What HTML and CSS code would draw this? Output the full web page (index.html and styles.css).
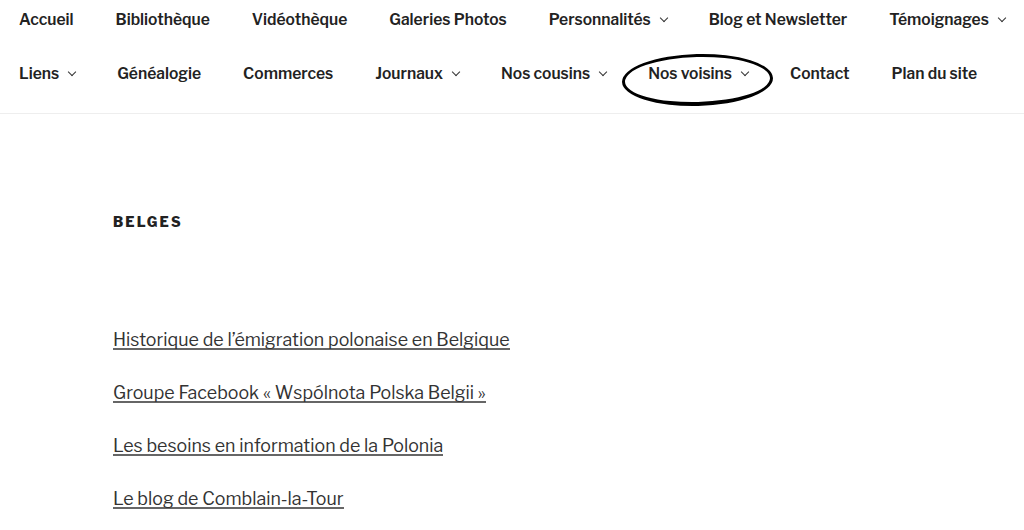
FILE: index.html
```html
<!DOCTYPE html>
<html lang="fr">
<head>
<meta charset="utf-8">
<title>Belges</title>
<link rel="stylesheet" href="styles.css">
</head>
<body>
<header class="site-nav">
  <ul class="menu">
    <li><a href="#">Accueil</a></li>
    <li><a href="#">Bibliothèque</a></li>
    <li><a href="#">Vidéothèque</a></li>
    <li><a href="#">Galeries Photos</a></li>
    <li><a href="#" class="has-sub">Personnalités</a></li>
    <li><a href="#">Blog et Newsletter</a></li>
    <li><a href="#" class="has-sub">Témoignages</a></li>
  </ul>
  <ul class="menu">
    <li><a href="#" class="has-sub">Liens</a></li>
    <li><a href="#">Généalogie</a></li>
    <li><a href="#">Commerces</a></li>
    <li><a href="#" class="has-sub">Journaux</a></li>
    <li><a href="#" class="has-sub">Nos cousins</a></li>
    <li class="circled"><a href="#" class="has-sub">Nos voisins</a><span class="ring"></span></li>
    <li><a href="#">Contact</a></li>
    <li><a href="#">Plan du site</a></li>
  </ul>
</header>
<main class="content">
  <h2 class="page-title">Belges</h2>
  <ul class="links">
    <li><a href="#">Historique de l’émigration polonaise en Belgique</a></li>
    <li><a href="#">Groupe Facebook « Wspólnota Polska Belgii »</a></li>
    <li><a href="#">Les besoins en information de la Polonia</a></li>
    <li><a href="#">Le blog de Comblain-la-Tour</a></li>
  </ul>
</main>
</body>
</html>
```

FILE: styles.css
```css
* { box-sizing: border-box; }
html, body { margin: 0; padding: 0; background: #fff; }
body {
  font-family: "Libre Franklin", Inter, "Liberation Sans", sans-serif;
  color: #222;
  overflow: hidden;
}
a { color: #222; text-decoration: none; }

.site-nav {
  border-bottom: 1px solid #eee;
  padding: 0 0 20px 0;
}
.menu {
  list-style: none;
  margin: 0 0 0 -2px;
  padding: 0;
  display: flex;
  flex-wrap: nowrap;
}
.menu li { position: relative; }
.menu a {
  display: block;
  padding: 10px 21px 9px 21px;
  font-size: 15.6px;
  font-weight: 600;
  line-height: 20px;
  white-space: nowrap;
}
.menu + .menu { margin-top: 15px; }
.menu .has-sub::after {
  content: "";
  display: inline-block;
  width: 5px;
  height: 5px;
  border-right: 1.2px solid #333;
  border-bottom: 1.2px solid #333;
  transform: rotate(45deg);
  margin-left: 10px;
  vertical-align: 4px;
}
.ring {
  position: absolute;
  left: -5px;
  top: 0;
  width: 151px;
  height: 52px;
  border: 3px solid #000;
  border-bottom-width: 4px;
  border-radius: 50%;
  transform: rotate(-1.5deg);
  pointer-events: none;
}

.content {
  padding: 99px 113px 0;
}
.page-title {
  margin: 0;
  font-size: 14px;
  font-weight: 800;
  letter-spacing: 0.15em;
  text-transform: uppercase;
  line-height: 18px;
}
.links {
  list-style: none;
  margin: 97px 0 0;
  padding: 0;
  display: flex;
  flex-direction: column;
  gap: 29px;
}
.links a {
  font-size: 17.8px;
  line-height: 24px;
  color: #333;
  box-shadow: inset 0 -2px 0 #666;
}
```
